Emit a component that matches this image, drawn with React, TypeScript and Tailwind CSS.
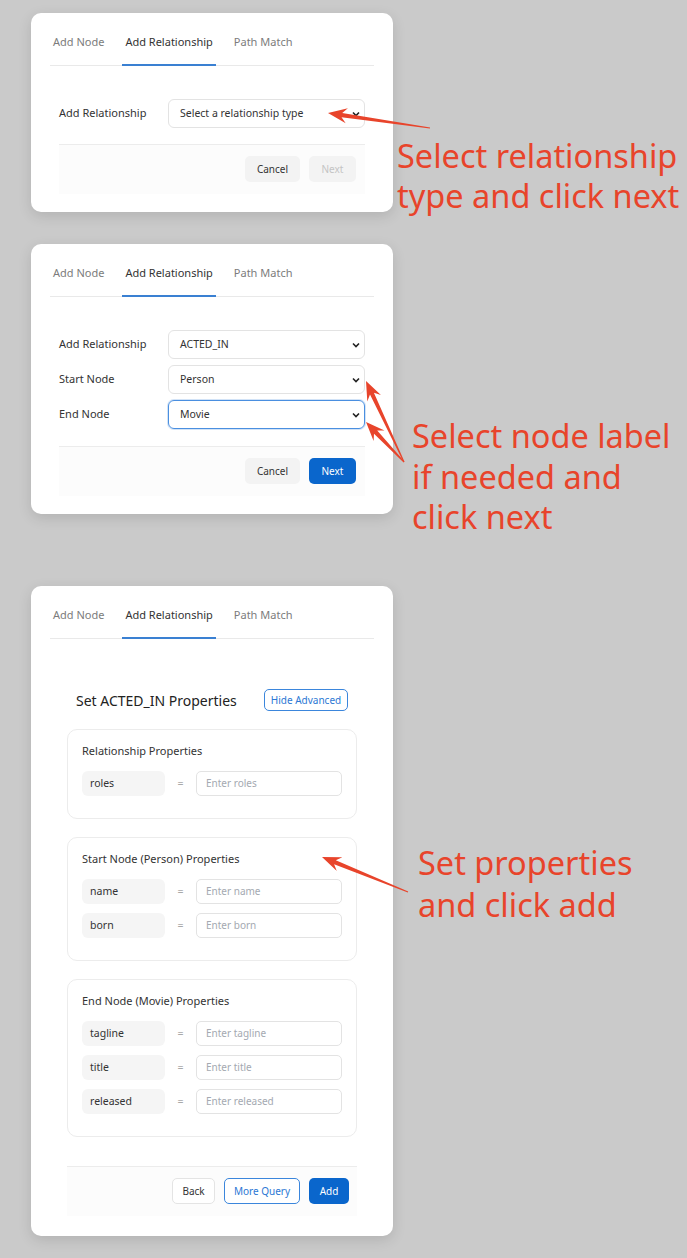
import React from 'react';

const tabs = ['Add Node', 'Add Relationship', 'Path Match'];

const Tabs = () => (
  <div className="flex gap-[15px] border-b border-[#e9e9e9]">
    {tabs.map((t) => (
      <div
        key={t}
        className={
          t === 'Add Relationship'
            ? 'h-[46px] -mb-px flex items-center px-[3px] border-b-2 border-[#3a80d2] text-[#333] text-[11px]'
            : 'h-[46px] -mb-px flex items-center px-[3px] border-b-2 border-transparent text-[#7c7c7c] text-[11px]'
        }
      >
        {t}
      </div>
    ))}
  </div>
);

const Chevron = () => (
  <svg width="8" height="6" viewBox="0 0 8 6" className="shrink-0">
    <path d="M1 1.5 L4 4.5 L7 1.5" fill="none" stroke="#222" strokeWidth="1.6" />
  </svg>
);

const SelectBox = ({ value, focus = false }: { value: string; focus?: boolean }) => (
  <div
    className={
      focus
        ? 'flex-1 h-[29px] rounded-[6px] border border-[#4a8fe0] shadow-[0_0_0_1px_rgba(74,143,224,0.25)] flex items-center justify-between pl-[11px] pr-[4px] text-[10.5px] text-[#333]'
        : 'flex-1 h-[29px] rounded-[6px] border border-[#e3e3e3] flex items-center justify-between pl-[11px] pr-[4px] text-[10.5px] text-[#333]'
    }
  >
    <span>{value}</span>
    <Chevron />
  </div>
);

const FieldRow = ({ label, children }: { label: string; children: React.ReactNode }) => (
  <div className="flex items-center">
    <div className="w-[109px] text-[11px] text-[#333]">{label}</div>
    {children}
  </div>
);

type Kind = 'gray' | 'disabled' | 'blue' | 'outline' | 'white';

const Btn = ({ children, kind, w, h = 'h-[26px]' }: { children: React.ReactNode; kind: Kind; w: string; h?: string }) => {
  const cls = {
    gray: 'bg-[#f3f3f3] text-[#333]',
    disabled: 'bg-[#f3f3f3] text-[#c4c4c4]',
    blue: 'bg-[#0a66cc] text-white',
    outline: 'bg-white border border-[#3b86dc] text-[#2b78d4]',
    white: 'bg-white border border-[#e4e4e4] text-[#333]',
  }[kind];
  return <div className={`${h} ${w} rounded-[5px] flex items-center justify-center text-[10px] ${cls}`}>{children}</div>;
};

const PropRow = ({ name }: { name: string }) => (
  <div className="flex items-center h-[25px]">
    <div className="w-[83px] h-[25px] rounded-[6px] bg-[#f5f5f5] flex items-center px-[8px] text-[10.5px] text-[#333]">{name}</div>
    <div className="w-[31px] text-center text-[10.5px] text-[#a9a9a9]">=</div>
    <div className="flex-1 h-[25px] rounded-[5px] border border-[#e3e3e3] flex items-center px-[9px] text-[10px] text-[#a4a9b1]">
      Enter {name}
    </div>
  </div>
);

const PropBox = ({ title, names }: { title: string; names: string[] }) => (
  <div className="border border-[#ececec] rounded-[10px] bg-white px-[14px] pt-[14px] pb-[22px]">
    <div className="h-[14px] flex items-center text-[11px] text-[#333] mb-[13px]">{title}</div>
    <div className="flex flex-col gap-[9px]">
      {names.map((n) => (
        <PropRow key={n} name={n} />
      ))}
    </div>
  </div>
);

const cardCls = 'w-[362px] shrink-0 bg-white rounded-[10px] shadow-[0_4px_14px_rgba(0,0,0,0.12)] px-[19px] pt-[7px]';

const noteCls = 'text-[#e8442b] text-[32.5px] whitespace-nowrap';

type P = [number, number];
const arrowPoints = (tail: P, tip: P) => {
  const dx = tip[0] - tail[0];
  const dy = tip[1] - tail[1];
  const len = Math.hypot(dx, dy);
  const ux = dx / len;
  const uy = dy / len;
  const nx = -uy;
  const ny = ux;
  const at = (d: number, w: number): string =>
    `${(tip[0] - ux * d + nx * w).toFixed(1)},${(tip[1] - uy * d + ny * w).toFixed(1)}`;
  return [
    at(len, 0.6),
    at(14, 2.2),
    at(19, 7.5),
    `${tip[0]},${tip[1]}`,
    at(19, -7.5),
    at(14, -2.2),
    at(len, -0.6),
  ].join(' ');
};

const arrows: [P, P][] = [
  [[430, 128], [328, 113]],
  [[404, 462], [366, 381]],
  [[404, 462], [366, 422]],
  [[408, 892], [322, 857]],
];

export default function App() {
  return (
    <div
      className="relative w-[687px] h-[1258px] overflow-hidden bg-[#cacaca] pl-[31px] pt-[13px]"
      style={{ fontFamily: '"Noto Sans", "Open Sans", sans-serif' }}
    >
      {/* step 1 */}
      <div className="flex items-start h-[200px]">
        <div className={cardCls}>
          <Tabs />
          <div className="px-[9px] pt-[33px]">
            <FieldRow label="Add Relationship">
              <SelectBox value="Select a relationship type" />
            </FieldRow>
          </div>
          <div className="mx-[9px] mt-[16px] border-t border-[#ececec] bg-[#fcfcfc] pt-[11px] pb-[12px] pr-[9px] flex justify-end gap-[9px]">
            <Btn kind="gray" w="w-[55px]">Cancel</Btn>
            <Btn kind="disabled" w="w-[47px]">Next</Btn>
          </div>
          <div className="h-[18px]" />
        </div>
        <div className={`${noteCls} leading-[40px] ml-[4px] mt-[123px]`}>
          Select relationship
          <br />
          type and click next
        </div>
      </div>

      {/* step 2 */}
      <div className="flex items-start mt-[31px] h-[270px]">
        <div className={cardCls}>
          <Tabs />
          <div className="px-[9px] pt-[33px] flex flex-col gap-[6px]">
            <FieldRow label="Add Relationship">
              <SelectBox value="ACTED_IN" />
            </FieldRow>
            <FieldRow label="Start Node">
              <SelectBox value="Person" />
            </FieldRow>
            <FieldRow label="End Node">
              <SelectBox value="Movie" focus />
            </FieldRow>
          </div>
          <div className="mx-[9px] mt-[17px] border-t border-[#ececec] bg-[#fcfcfc] pt-[11px] pb-[12px] pr-[9px] flex justify-end gap-[9px]">
            <Btn kind="gray" w="w-[55px]">Cancel</Btn>
            <Btn kind="blue" w="w-[47px]">Next</Btn>
          </div>
          <div className="h-[18px]" />
        </div>
        <div className={`${noteCls} leading-[40.5px] ml-[19px] mt-[172px]`}>
          Select node label
          <br />
          if needed and
          <br />
          click next
        </div>
      </div>

      {/* step 3 */}
      <div className="flex items-start mt-[72px]">
        <div className={cardCls}>
          <Tabs />
          <div className="px-[17px] pt-[50px]">
            <div className="flex items-center justify-between px-[9px] h-[22px]">
              <div className="text-[14px] text-[#222]">Set ACTED_IN Properties</div>
              <Btn kind="outline" w="w-[84px]" h="h-[22px]">Hide Advanced</Btn>
            </div>
            <div className="mt-[18px] flex flex-col gap-[18px]">
              <PropBox title="Relationship Properties" names={['roles']} />
              <PropBox title="Start Node (Person) Properties" names={['name', 'born']} />
              <PropBox title="End Node (Movie) Properties" names={['tagline', 'title', 'released']} />
            </div>
            <div className="mt-[29px] border-t border-[#ececec] bg-[#fcfcfc] pt-[11px] pb-[12px] pr-[8px] flex justify-end gap-[9px]">
              <Btn kind="white" w="w-[43px]">Back</Btn>
              <Btn kind="outline" w="w-[76px]">More Query</Btn>
              <Btn kind="blue" w="w-[40px]">Add</Btn>
            </div>
          </div>
          <div className="h-[20px]" />
        </div>
        <div className={`${noteCls} leading-[42px] ml-[25px] mt-[256px]`}>
          Set properties
          <br />
          and click add
        </div>
      </div>

      {/* annotation arrows */}
      <svg className="absolute inset-0 pointer-events-none" width="687" height="1258">
        {arrows.map(([a, b], i) => (
          <polygon key={i} points={arrowPoints(a, b)} fill="#e8442b" />
        ))}
      </svg>
    </div>
  );
}
